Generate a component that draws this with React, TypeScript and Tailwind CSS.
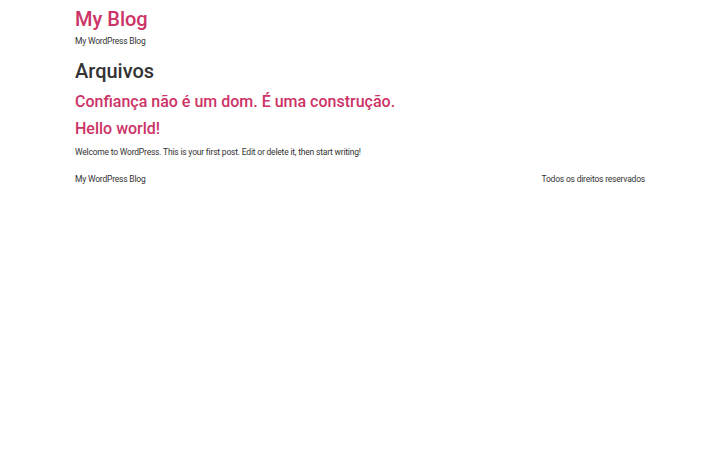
export default function App() {
  return (
    <div className="min-h-screen bg-white text-[#333] font-['Roboto',sans-serif]">
      <div className="mx-auto w-[570px]">
        <header className="pt-[6px]">
          <h1 className="text-[20px] leading-[26px] font-medium text-[#cc3366]">My Blog</h1>
          <p className="mt-[3px] text-[8.5px] leading-[12px] tracking-[-0.2px]">My WordPress Blog</p>
        </header>
        <main className="mt-[11px]">
          <h1 className="text-[20px] leading-[26px] font-medium">Arquivos</h1>
          <div className="mt-[7px]">
            <h2 className="text-[16px] leading-[22px] font-medium text-[#cc3366]">
              Confiança não é um dom. É uma construção.
            </h2>
          </div>
          <div className="mt-[5px]">
            <h2 className="text-[16px] leading-[22px] font-medium text-[#cc3366]">Hello world!</h2>
            <p className="mt-[6px] text-[8.5px] leading-[12px] tracking-[-0.2px]">
              Welcome to WordPress. This is your first post. Edit or delete it, then start writing!
            </p>
          </div>
        </main>
        <footer className="mt-[15px] flex justify-between text-[8.5px] leading-[12px] tracking-[-0.2px]">
          <span>My WordPress Blog</span>
          <span>Todos os direitos reservados</span>
        </footer>
      </div>
    </div>
  );
}
